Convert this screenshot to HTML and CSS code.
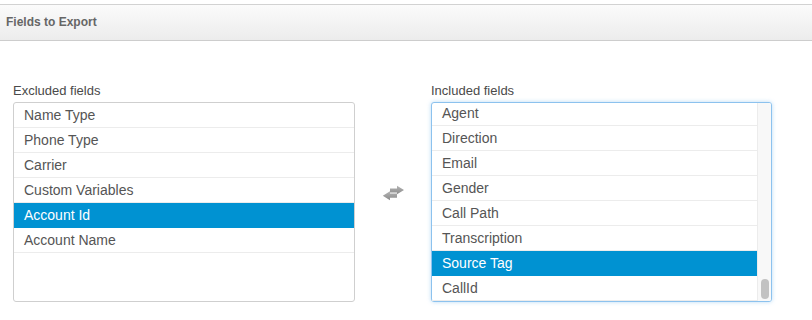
FILE: index.html
```html
<!DOCTYPE html>
<html>
	<head>
		<meta charset="UTF-8">
		<title>Fields to Export</title>
		<link rel="stylesheet" href="styles.css">
	</head>
	<body>
		<div class="panel">
			<div class="panel-heading">Fields to Export</div>
			<div class="panel-body">
				<div class="field-col">
					<div class="field-label">Excluded fields</div>
					<div class="field-box">
						<ul class="field-list">
							<li>Name Type</li>
							<li>Phone Type</li>
							<li>Carrier</li>
							<li>Custom Variables</li>
							<li class="selected">Account Id</li>
							<li>Account Name</li>
						</ul>
					</div>
				</div>
				<div class="swap">
					<svg width="23" height="16" viewBox="0 0 23 16">
						<defs>
							<linearGradient id="arrowGrad" x1="0" y1="0" x2="0" y2="1">
								<stop offset="0" stop-color="#b4b4b4"/>
								<stop offset="1" stop-color="#8c8c8c"/>
							</linearGradient>
						</defs>
						<path d="M8 3.4H15V0.7L22 5L15 9.2V7.4H8Z" fill="url(#arrowGrad)"/>
						<path d="M15 8.6H8V6.2L0.8 10.7L8 15.2V12.8H15Z" fill="url(#arrowGrad)"/>
					</svg>
				</div>
				<div class="field-col">
					<div class="field-label">Included fields</div>
					<div class="field-box focused">
						<ul class="field-list scrolled">
							<li>Agent</li>
							<li>Direction</li>
							<li>Email</li>
							<li>Gender</li>
							<li>Call Path</li>
							<li>Transcription</li>
							<li class="selected">Source Tag</li>
							<li>CallId</li>
						</ul>
						<div class="scroll-track"><span class="scroll-thumb"></span></div>
					</div>
				</div>
			</div>
		</div>
	</body>
</html>
```

FILE: styles.css
```css
*{margin:0;padding:0;box-sizing:border-box;}
html,body{height:100%;}
body{
	background:#fff;
	font-family:"Liberation Sans",Arial,Helvetica,sans-serif;
	color:#555;
}
.panel{padding-top:4px;}
.panel-heading{
	height:37px;
	line-height:35px;
	padding-left:6px;
	font-size:12px;
	font-weight:bold;
	color:#666;
	border-top:1px solid #d2d2d2;
	border-bottom:1px solid #cdcdcd;
	background:linear-gradient(#fbfbfb,#ececec);
}
.panel-body{
	display:grid;
	grid-template-columns:342px 76px 341px;
	padding:42px 0 0 13px;
}
.field-label{
	font-size:13px;
	line-height:16px;
	color:#4a4a4a;
	margin-bottom:3px;
}
.field-box{
	display:flex;
	height:200px;
	border:1px solid #cfcfcf;
	border-radius:3px;
	overflow:hidden;
	background:#fff;
}
.field-box.focused{
	border-color:#8cc2ee;
	box-shadow:0 0 4px rgba(102,175,233,.45);
	overflow:visible;
}
.field-list{
	flex:1;
	list-style:none;
	overflow:hidden;
	display:flex;
	flex-direction:column;
}
.field-list.scrolled{justify-content:flex-end;}
.field-list li{
	flex:none;
	height:25px;
	line-height:24px;
	padding-left:10px;
	font-size:14px;
	color:#555;
	border-bottom:1px solid #ececec;
	white-space:nowrap;
}
.field-list li.selected{
	background:#0092d2;
	color:#fff;
	border-bottom-color:#0092d2;
}
.swap{
	align-self:center;
	padding-left:27px;
}
.swap svg{display:block;}
.scroll-track{
	width:14px;
	flex:none;
	display:flex;
	flex-direction:column;
	justify-content:flex-end;
	align-items:center;
	padding:0 0 2px 1px;
	background:#f8f8f8;
	border-left:1px solid #ececec;
	border-radius:0 2px 2px 0;
}
.scroll-thumb{
	display:block;
	width:8px;
	height:20px;
	border-radius:4px;
	background:#c2c2c2;
}
```
